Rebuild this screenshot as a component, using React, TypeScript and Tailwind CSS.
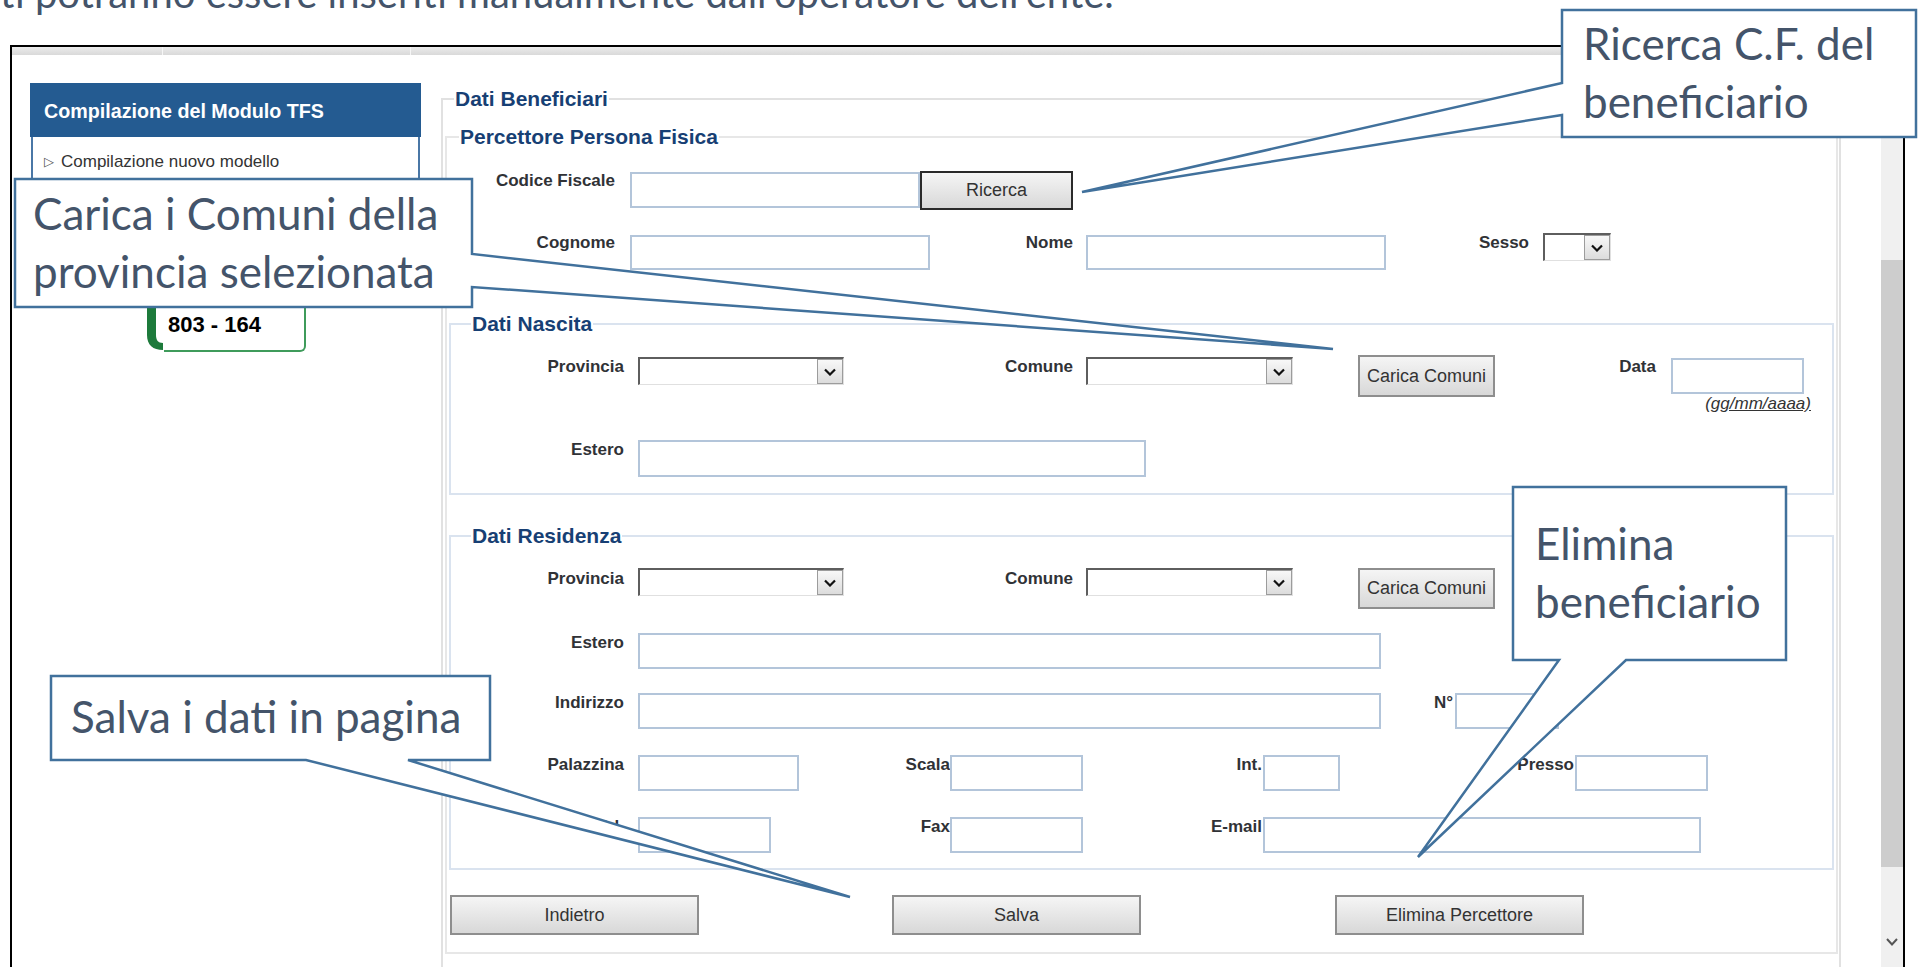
import React from "react";

const SANS = "font-['Liberation_Sans',Arial,sans-serif]";

function Label({ children, className = "" }: { children: React.ReactNode; className?: string }) {
  return (
    <div
      className={`shrink-0 whitespace-nowrap text-right font-['Liberation_Sans',Arial,sans-serif] text-[17px] leading-[20px] font-bold text-[#303236] ${className}`}
    >
      {children}
    </div>
  );
}

function Field({ className = "" }: { className?: string }) {
  return <input type="text" className={`shrink-0 border-2 border-[#b3c5da] bg-white outline-none ${className}`} />;
}

function Chevron() {
  return (
    <svg width="12" height="8" viewBox="0 0 12 8" fill="none" stroke="#111" strokeWidth="2.2">
      <path d="M1 1.5 L6 6.5 L11 1.5" />
    </svg>
  );
}

function Select({ className = "" }: { className?: string }) {
  return (
    <div
      className={`flex h-[28px] shrink-0 border-t-2 border-l-2 border-r border-b border-[#5e5e5e] border-r-[#e0e0e0] border-b-[#e0e0e0] bg-white ${className}`}
    >
      <div className="flex-1" />
      <div className="flex w-[26px] items-center justify-center border border-[#9c9c9c] bg-linear-to-b from-[#f8f8f8] to-[#dcdcdc]">
        <Chevron />
      </div>
    </div>
  );
}

function Btn({ label, className = "" }: { label: string; className?: string }) {
  return (
    <button
      className={`flex shrink-0 items-center justify-center border-2 bg-linear-to-b from-[#f5f5f5] to-[#d8d8d8] font-['Liberation_Sans',Arial,sans-serif] text-[18px] text-[#333] ${className}`}
    >
      {label}
    </button>
  );
}

function Legend({ children, className = "" }: { children: React.ReactNode; className?: string }) {
  return (
    <legend
      className={`px-[1px] font-['Liberation_Sans',Arial,sans-serif] text-[21px] leading-[24px] font-bold text-[#173f74] ${className}`}
    >
      {children}
    </legend>
  );
}

function Handset() {
  return (
    <svg width="20" height="64" viewBox="0 0 20 64" className="shrink-0">
      <path
        d="M19 2 C9 2 3 7 3 17 L3 47 C3 57 9 62 19 62 L19 55 C14 55 12 52 12 47 L12 17 C12 12 14 9 19 9 Z"
        fill="#1d7a3b"
      />
    </svg>
  );
}

export default function App() {
  return (
    <div className="relative h-[967px] w-[1918px] overflow-hidden bg-white">
      {/* slide caption, clipped at the top */}
      <div className="h-[45px] overflow-hidden">
        <p className="-mt-[27px] whitespace-nowrap font-['Lato',sans-serif] text-[40px] leading-[40px] text-[#44546a]">
          ti potranno essere inseriti manualmente dall'operatore dell'ente.
        </p>
      </div>

      {/* browser window */}
      <div className="ml-[10px] flex h-[922px] w-[1895px] flex-col border-x-2 border-t-2 border-black">
        <div className="flex h-[8px] shrink-0 bg-linear-to-b from-[#ececec] to-[#d9d9d9]">
          <div className="w-[151px] border-r border-[#f6f6f6]" />
          <div className="w-[248px] border-r border-[#f6f6f6]" />
        </div>

        <div className="flex min-h-0 flex-1">
          {/* left menu */}
          <aside className="w-[429px] shrink-0 pt-[28px]">
            <div className="ml-[18px] w-[391px]">
              <div className="flex h-[54px] items-center bg-[#245b91] pt-[3px] pl-[14px] font-['Liberation_Sans',Arial,sans-serif] text-[19.7px] font-bold text-white">
                Compilazione del Modulo TFS
              </div>
              <div className="mx-[1px] h-[110px] border-x-2 border-b-2 border-[#4a77a6] pt-[15px] pl-[11px]">
                <div className={`flex items-center ${SANS} text-[17px] leading-[20px] text-[#333]`}>
                  <span className="w-[17px] font-['DejaVu_Sans',sans-serif] text-[13px] text-[#555]">▷</span>
                  Compilazione nuovo modello
                </div>
              </div>
            </div>
            <div className="mt-[41px] ml-[132px] flex h-[64px] w-[162px]">
              <Handset />
              <div className="flex-1 rounded-br-[6px] border-r-2 border-b-2 border-[#3f9b5b] pt-[24px] pl-[4px] font-['Liberation_Sans',Arial,sans-serif] text-[22px] leading-[26px] font-bold text-black">
                803 - 164
              </div>
            </div>
          </aside>

          {/* form */}
          <main className="w-[1400px] shrink-0 pt-[32px]">
            <fieldset className="min-h-[900px] border-2 border-[#e1e1e1]">
              <Legend className="ml-[11px]">Dati Beneficiari</Legend>

              <fieldset className="mt-[14px] mr-[1px] ml-[2px] border-2 border-[#e7e7e7] pb-[17px]">
                <Legend className="ml-[12px]">Percettore Persona Fisica</Legend>

                <div className="mt-[22px] flex items-start">
                  <Label className="w-[168px]">Codice Fiscale</Label>
                  <Field className="mt-[1px] ml-[15px] h-[36px] w-[290px]" />
                  <Btn label="Ricerca" className="h-[39px] w-[153px] border-[#2a2a2a]" />
                </div>

                <div className="mt-[23px] flex items-start">
                  <Label className="w-[168px]">Cognome</Label>
                  <Field className="mt-[2px] ml-[15px] h-[35px] w-[300px]" />
                  <Label className="w-[143px]">Nome</Label>
                  <Field className="mt-[2px] ml-[13px] h-[35px] w-[300px]" />
                  <Label className="w-[143px]">Sesso</Label>
                  <Select className="ml-[14px] w-[68px]" />
                </div>

                <fieldset className="mt-[42px] mr-[2px] ml-[2px] border-2 border-[#dae3ef] pb-[16px]">
                  <Legend className="ml-[20px]">Dati Nascita</Legend>
                  <div className="mt-[19px] flex h-[42px] items-start">
                    <Label className="mt-[2px] w-[173px]">Provincia</Label>
                    <Select className="mt-[2px] ml-[14px] w-[206px]" />
                    <Label className="mt-[2px] w-[229px]">Comune</Label>
                    <Select className="mt-[2px] ml-[13px] w-[207px]" />
                    <Btn label="Carica Comuni" className="ml-[65px] h-[42px] w-[137px] border-[#8e8e8e]" />
                    <Label className="mt-[2px] w-[161px]">Data</Label>
                    <div className="ml-[15px] flex w-[133px] shrink-0 flex-col items-end">
                      <Field className="mt-[3px] h-[36px] w-full" />
                      <span className={`-mr-[7px] ${SANS} text-[17px] leading-[20px] text-[#333] italic underline`}>
                        (gg/mm/aaaa)
                      </span>
                    </div>
                  </div>
                  <div className="mt-[43px] flex items-start">
                    <Label className="w-[173px]">Estero</Label>
                    <Field className="ml-[14px] h-[37px] w-[508px]" />
                  </div>
                </fieldset>

                <fieldset className="mt-[29px] mr-[2px] ml-[2px] border-2 border-[#dae3ef] pb-[15px]">
                  <Legend className="ml-[20px]">Dati Residenza</Legend>
                  <div className="mt-[20px] flex h-[41px] items-start">
                    <Label className="mt-[1px] w-[173px]">Provincia</Label>
                    <Select className="ml-[14px] w-[206px]" />
                    <Label className="mt-[1px] w-[229px]">Comune</Label>
                    <Select className="ml-[13px] w-[207px]" />
                    <Btn label="Carica Comuni" className="ml-[65px] h-[41px] w-[137px] border-[#8e8e8e]" />
                  </div>
                  <div className="mt-[24px] flex items-start">
                    <Label className="w-[173px]">Estero</Label>
                    <Field className="ml-[14px] h-[36px] w-[743px]" />
                  </div>
                  <div className="mt-[24px] flex items-start">
                    <Label className="w-[173px]">Indirizzo</Label>
                    <Field className="ml-[14px] h-[36px] w-[743px]" />
                    <Label className="w-[72px]">N°</Label>
                    <Field className="ml-[2px] h-[36px] w-[104px]" />
                  </div>
                  <div className="mt-[26px] flex items-start">
                    <Label className="w-[173px]">Palazzina</Label>
                    <Field className="ml-[14px] h-[36px] w-[161px]" />
                    <Label className="w-[151px]">Scala</Label>
                    <Field className="h-[36px] w-[133px]" />
                    <Label className="w-[179px]">Int.</Label>
                    <Field className="ml-[1px] h-[36px] w-[77px]" />
                    <Label className="w-[234px]">Presso</Label>
                    <Field className="ml-[1px] h-[36px] w-[133px]" />
                  </div>
                  <div className="mt-[26px] flex items-start">
                    <Label className="w-[173px]">Tel.</Label>
                    <Field className="ml-[14px] h-[36px] w-[133px]" />
                    <Label className="w-[179px]">Fax</Label>
                    <Field className="h-[36px] w-[133px]" />
                    <Label className="w-[179px]">E-mail</Label>
                    <Field className="ml-[1px] h-[36px] w-[438px]" />
                  </div>
                </fieldset>

                <div className="mt-[25px] flex">
                  <Btn label="Indietro" className="ml-[3px] h-[40px] w-[249px] border-[#8e8e8e]" />
                  <Btn label="Salva" className="ml-[193px] h-[40px] w-[249px] border-[#8e8e8e]" />
                  <Btn label="Elimina Percettore" className="ml-[194px] h-[40px] w-[249px] border-[#8e8e8e]" />
                </div>
              </fieldset>
            </fieldset>
          </main>

          <div className="w-[40px] shrink-0" />

          {/* scrollbar */}
          <div className="flex w-[22px] shrink-0 flex-col items-center bg-[#f0f0f0]">
            <div className="mt-[205px] h-[607px] w-full bg-[#cdcdcd]" />
            <svg width="12" height="8" viewBox="0 0 12 8" fill="none" stroke="#555" strokeWidth="2" className="mt-[71px]">
              <path d="M1 1 L6 6.5 L11 1" />
            </svg>
          </div>
        </div>
      </div>

      {/* callouts */}
      <svg
        className="pointer-events-none absolute top-0 left-0"
        width="1918"
        height="967"
        viewBox="0 0 1918 967"
        fill="#fff"
        stroke="#41719c"
        strokeWidth="2.5"
      >
        <polygon points="1562,10 1916,10 1916,137 1562,137 1562,115 1082,192 1562,83" />
        <polygon points="15,179 472,179 472,254 1333,349 472,287 472,307 15,307" />
        <polygon points="51,676 490,676 490,760 408,760 850,897 306,760 51,760" />
        <polygon points="1513,487 1786,487 1786,660 1626,660 1418,857 1559,660 1513,660" />
      </svg>
      <div className="absolute top-[14px] left-[1583px] font-['Lato',sans-serif] text-[44px] leading-[58px] whitespace-nowrap text-[#44546a]">
        Ricerca C.F. del
        <br />
        beneficiario
      </div>
      <div className="absolute top-[184px] left-[33px] font-['Lato',sans-serif] text-[44px] leading-[58px] whitespace-nowrap text-[#44546a]">
        Carica i Comuni della
        <br />
        provincia selezionata
      </div>
      <div className="absolute top-[687px] left-[71px] font-['Lato',sans-serif] text-[44px] leading-[58px] whitespace-nowrap text-[#44546a]">
        Salva i dati in pagina
      </div>
      <div className="absolute top-[514px] left-[1535px] font-['Lato',sans-serif] text-[44px] leading-[58px] whitespace-nowrap text-[#44546a]">
        Elimina
        <br />
        beneficiario
      </div>
    </div>
  );
}
